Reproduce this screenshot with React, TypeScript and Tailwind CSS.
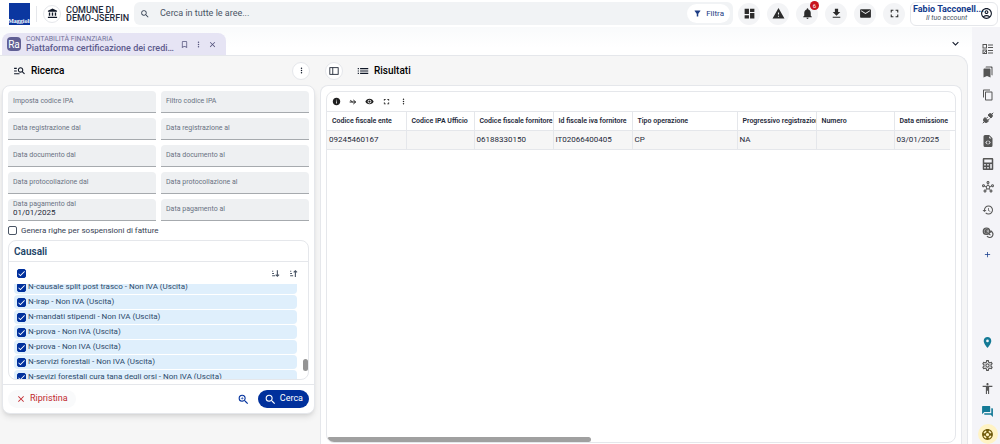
import React from 'react';
import {
  MdAccessibility,
  MdAccountBalance,
  MdAdd,
  MdBookmarkBorder,
  MdBookmarks,
  MdCheck,
  MdClose,
  MdContentCopy,
  MdDashboard,
  MdEmail,
  MdFileDownload,
  MdFilterAlt,
  MdForum,
  MdFullscreen,
  MdHistory,
  MdInfo,
  MdKeyboardArrowDown,
  MdList,
  MdLocationOn,
  MdManageSearch,
  MdMoreVert,
  MdNotifications,
  MdOutlineAccountCircle,
  MdOutlineHub,
  MdOutlineSettings,
  MdSearch,
  MdSupport,
  MdVisibility,
  MdWarning,
  MdZoomIn,
} from 'react-icons/md';
import { FaCalculator } from 'react-icons/fa';
import { BsFileEarmarkCodeFill } from 'react-icons/bs';

type IconProps = { className?: string };

function ChecklistIcon({ className }: IconProps) {
  return (
    <svg viewBox="0 0 24 24" fill="none" stroke="currentColor" strokeWidth="2" className={className}>
      <rect x="2" y="3" width="7" height="7" />
      <rect x="2" y="14" width="7" height="7" />
      <path d="M3.5 17.5l1.5 1.5 3-3.5M12 4h10M12 9h10M12 15h10M12 20h10" />
    </svg>
  );
}

function PlugsIcon({ className }: IconProps) {
  return (
    <svg viewBox="0 0 24 24" fill="currentColor" stroke="currentColor" strokeWidth="2" className={className}>
      <path d="M6 11l7 7-1.500 1.500c-2 2-5 2-7 0s-2-5 0-7z" />
      <path d="M12 6l6 6 1.500-1.500c1.700-1.700 1.700-4.300 0-6s-4.300-1.700-6 0z" />
      <path d="M1.500 22.500l4-4M18.500 5.500l4-4M9 12.500l3-3M12.500 16l3-3" fill="none" />
    </svg>
  );
}

function CoinsIcon({ className }: IconProps) {
  return (
    <svg viewBox="0 0 24 24" fill="none" stroke="currentColor" strokeWidth="2.4" className={className}>
      <circle cx="9" cy="8.500" r="6.500" fill="currentColor" fillOpacity="0.45" />
      <path d="M11.500 6a3.200 3.200 0 1 0 0 5M6 8.500h4" />
      <path d="M18 8.500a6.500 6.500 0 1 1-8 9.500M21 11l-3-3-2 3.500M14 14.500l3 1.500" />
    </svg>
  );
}

function PanelIcon({ className }: IconProps) {
  return (
    <svg viewBox="0 0 24 24" fill="none" stroke="currentColor" strokeWidth="2" className={className}>
      <rect x="2" y="4" width="20" height="16" />
      <path d="M9 4v16" />
    </svg>
  );
}

function SplitArrowIcon({ className }: IconProps) {
  return (
    <svg viewBox="0 0 24 24" fill="none" stroke="currentColor" strokeWidth="3" className={className}>
      <path d="M2 12h18M13 6l7 6-7 6M4 7l7 5" />
    </svg>
  );
}

function SortIcon({ className, up }: IconProps & { up?: boolean }) {
  return (
    <svg viewBox="0 0 24 24" fill="none" stroke="currentColor" strokeWidth="3" className={className}>
      <path d="M3 6h3M3 12h5M3 18h8" />
      <path d={up ? 'M17 21V5M12.5 9L17 4.500L21.500 9' : 'M17 3v16M12.500 15l4.500 4.500L21.500 15'} />
    </svg>
  );
}

const topActions = [
  { icon: MdDashboard, label: 'Dashboard' },
  { icon: MdWarning, label: 'Avvisi' },
  { icon: MdNotifications, label: 'Notifiche', badge: 6 },
  { icon: MdFileDownload, label: 'Download' },
  { icon: MdEmail, label: 'Messaggi' },
  { icon: MdFullscreen, label: 'Schermo intero' },
];

const sideTools = [
  { icon: ChecklistIcon, label: 'Attività' },
  { icon: MdBookmarks, label: 'Segnalibri' },
  { icon: MdContentCopy, label: 'Copia' },
  { icon: PlugsIcon, label: 'Connessioni' },
  { icon: BsFileEarmarkCodeFill, label: 'Codice' },
  { icon: FaCalculator, label: 'Calcolatrice' },
  { icon: MdOutlineHub, label: 'Rete' },
  { icon: MdHistory, label: 'Cronologia' },
  { icon: CoinsIcon, label: 'Valute' },
];

const fields = [
  { id: 'ipa', label: 'Imposta codice IPA' },
  { id: 'filtro-ipa', label: 'Filtro codice IPA' },
  { id: 'reg-dal', label: 'Data registrazione dal' },
  { id: 'reg-al', label: 'Data registrazione al' },
  { id: 'doc-dal', label: 'Data documento dal' },
  { id: 'doc-al', label: 'Data documento al' },
  { id: 'prot-dal', label: 'Data protocollazione dal' },
  { id: 'prot-al', label: 'Data protocollazione al' },
  { id: 'pag-dal', label: 'Data pagamento dal', value: '01/01/2025' },
  { id: 'pag-al', label: 'Data pagamento al' },
];

const causali = [
  'N-causale split post trasco - Non IVA (Uscita)',
  'N-irap - Non IVA (Uscita)',
  'N-mandati stipendi - Non IVA (Uscita)',
  'N-prova - Non IVA (Uscita)',
  'N-prova - Non IVA (Uscita)',
  'N-servizi forestali - Non IVA (Uscita)',
  'N-sevizi forestali cura tana degli orsi - Non IVA (Uscita)',
];

const columns = [
  { title: 'Codice fiscale ente', value: '09245460167', width: 'w-[79px]' },
  { title: 'Codice IPA Ufficio', value: '', width: 'w-[68px]' },
  { title: 'Codice fiscale fornitore', value: '06188330150', width: 'w-[79px]' },
  { title: 'Id fiscale iva fornitore', value: 'IT02066400405', width: 'w-[79px]' },
  { title: 'Tipo operazione', value: 'CP', width: 'w-[105px]' },
  { title: 'Progressivo registrazione', value: 'NA', width: 'w-[79px]' },
  { title: 'Numero', value: '', width: 'w-[78px]' },
  { title: 'Data emissione', value: '03/01/2025', width: '' },
];

function CheckBox({ label, checked = true }: { label?: string; checked?: boolean }) {
  return (
    <span className="relative flex w-[9px] h-[9px] shrink-0">
      <input
        type="checkbox"
        aria-label={label}
        defaultChecked={checked}
        className="peer appearance-none w-[9px] h-[9px] rounded-xs border border-gray-600 checked:bg-[#00309c] checked:border-[#00309c]"
      />
      <MdCheck className="absolute inset-0 w-[9px] h-[9px] text-white opacity-0 peer-checked:opacity-100 pointer-events-none" />
    </span>
  );
}

function Field({ id, label, value }: { id: string; label: string; value?: string }) {
  const box = 'h-[22px] px-[5px] bg-[#eef0f2] border-b border-[#a6aaae] rounded-t';

  if (!value) {
    return (
      <input
        id={id}
        type="text"
        aria-label={label}
        placeholder={label}
        className={`${box} w-full pb-[2px] text-[7px] text-gray-700 placeholder:text-gray-500 outline-none`}
      />
    );
  }

  return (
    <div className={`${box} flex flex-col`}>
      <label htmlFor={id} className="pt-px text-[7px] leading-[9px] text-gray-500">
        {label}
      </label>
      <input
        id={id}
        type="text"
        defaultValue={value}
        className="w-full h-[10px] -mt-px text-[8px] leading-[10px] text-gray-800 outline-none"
      />
    </div>
  );
}

function TopBar() {
  return (
    <header className="flex items-center h-[27px] pl-[9px] pr-[2px] shrink-0 bg-white">
      <div className="flex items-end justify-center w-[21px] h-[22px] bg-[#0b37a0]">
        <span className="font-['Liberation_Serif'] font-bold text-[6px] leading-[7px] text-white">Maggioli</span>
      </div>
      <div className="w-px h-4 mx-[6px] bg-gray-200" />
      <button aria-label="Ente" className="flex items-center justify-center w-[18px] h-[18px] mr-[5px] rounded-full border border-gray-200">
        <MdAccountBalance className="w-[11px] h-[11px]" />
      </button>
      <p className="w-[68px] text-[9px] leading-[8px] font-medium text-gray-800 whitespace-nowrap">
        COMUNE DI
        <br />
        DEMO-JSERFIN
      </p>
      <div className="flex flex-1 items-center h-[23px] pl-[6px] pr-[3px] mr-[5px] bg-[#f1f3f5] rounded-md">
        <MdSearch className="w-[10px] h-[10px] mr-[10px] text-gray-700" />
        <input
          type="text"
          aria-label="Cerca in tutte le aree"
          placeholder="Cerca in tutte le aree..."
          className="flex-1 text-[9px] placeholder:text-gray-600 outline-none"
        />
        <button className="flex items-center gap-1 h-[19px] px-[6px] bg-white rounded-full text-[8px] text-[#1c3c84]">
          <MdFilterAlt className="w-[9px] h-[9px]" />
          Filtra
        </button>
      </div>
      <div className="flex items-center gap-[7px]">
        {topActions.map(({ icon: Icon, label, badge }) => (
          <button
            key={label}
            aria-label={label}
            className="relative flex items-center justify-center w-[22px] h-[22px] rounded-full bg-gray-100 text-[#2b2b2b]"
          >
            <Icon className="w-[13px] h-[13px]" />
            {badge && (
              <span className="absolute -top-[2px] -right-px w-[9px] h-[9px] rounded-full bg-[#c8141e] text-[6px] leading-[9px] text-white">
                {badge}
              </span>
            )}
          </button>
        ))}
      </div>
      <button className="flex items-center w-[88px] h-[24px] pl-[2px] pr-[4px] ml-[5px] border border-gray-200 rounded-md">
        <span className="flex-1 min-w-0 text-left whitespace-nowrap">
          <span className="block text-[9px] leading-[9px] font-bold text-[#123a8c]">Fabio Tacconell...</span>
          <span className="block pl-[13px] text-[7px] leading-[8px] italic text-gray-600">Il tuo account</span>
        </span>
        <MdOutlineAccountCircle className="w-[13px] h-[13px] shrink-0" />
      </button>
    </header>
  );
}

function TabStrip() {
  return (
    <div className="flex items-end justify-between h-[28px] shrink-0 pl-[2px] pr-[10px]">
      <div className="flex items-center w-[224px] h-[22px] pl-[5px] pr-[9px] bg-[#e6e4f4] rounded-t-lg">
        <svg viewBox="0 0 14 14" className="w-[14px] h-[14px] mr-[5px]">
          <rect width="14" height="14" rx="4" fill="#605f94" />
          <text x="7" y="11" textAnchor="middle" fontSize="10" fill="#fff" fontFamily="Roboto">
            Ra
          </text>
        </svg>
        <div className="w-[149px]">
          <p className="text-[7px] leading-[8px] text-[#75739b]">CONTABILITÀ FINANZIARIA</p>
          <p className="truncate text-[9px] leading-[10px] font-medium text-[#5c5a8c]">
            Piattaforma certificazione dei crediti commerciali
          </p>
        </div>
        <div className="flex flex-1 items-center justify-between pl-[5px] text-[#54537c]">
          <button aria-label="Segnalibro">
            <MdBookmarkBorder className="w-[9px] h-[9px]" />
          </button>
          <button aria-label="Menu scheda">
            <MdMoreVert className="w-[9px] h-[9px]" />
          </button>
          <button aria-label="Chiudi scheda">
            <MdClose className="w-[9px] h-[9px]" />
          </button>
        </div>
      </div>
      <button aria-label="Schede aperte" className="mb-[5px]">
        <MdKeyboardArrowDown className="w-[13px] h-[13px]" />
      </button>
    </div>
  );
}

function SearchPanel() {
  return (
    <section className="w-[313px] shrink-0">
      <div className="flex items-center h-[29px] pl-[11px] pr-[5px]">
        <MdManageSearch className="w-[13px] h-[13px] mr-[5px]" />
        <h2 className="flex-1 text-[10px] font-medium text-black">Ricerca</h2>
        <button aria-label="Opzioni ricerca" className="flex items-center justify-center w-[18px] h-[18px] rounded-full bg-white border border-gray-200">
          <MdMoreVert className="w-[9px] h-[9px]" />
        </button>
      </div>
      <form className="bg-white border border-gray-200 rounded-lg shadow-md" onSubmit={(e) => e.preventDefault()}>
        <div className="px-[5px] pt-[5px]">
          <div className="grid grid-cols-2 gap-[5px]">
            {fields.map((field) => (
              <Field key={field.id} {...field} />
            ))}
          </div>
          <label className="flex items-center gap-[4px] h-[19px] text-[8px] text-gray-700">
            <CheckBox checked={false} />
            Genera righe per sospensioni di fatture
          </label>
          <div className="border border-gray-200 rounded-lg overflow-hidden">
            <h3 className="h-[21px] px-[5px] text-[10px] leading-[21px] font-semibold text-[#1d4468] border-b border-gray-200">
              Causali
            </h3>
            <div className="flex items-center h-[22px] pl-[8px] pr-[10px] text-gray-600">
              <CheckBox label="Seleziona tutte le causali" />
              <button type="button" aria-label="Ordina decrescente" className="ml-auto mr-[9px]">
                <SortIcon className="w-[9px] h-[9px]" />
              </button>
              <button type="button" aria-label="Ordina crescente">
                <SortIcon up className="w-[9px] h-[9px]" />
              </button>
            </div>
            <div className="flex h-[95px] pl-[5px] overflow-hidden">
              <ul className="flex flex-1 flex-col gap-px -mt-1">
                {causali.map((causale, i) => (
                  <li key={i} className="shrink-0 h-[14px] bg-[#dfeffc] rounded">
                    <label className="flex items-center gap-[2px] h-full pl-[3px] text-[8px] text-[#2c4a6b]">
                      <CheckBox />
                      {causale}
                    </label>
                  </li>
                ))}
              </ul>
              <div className="flex items-end w-[11px] pl-[6px] pb-2">
                <div className="w-[5px] h-[12px] rounded-full bg-[#949494]" />
              </div>
            </div>
          </div>
        </div>
        <div className="flex items-center h-[29px] mt-[4px] px-[5px] border-t border-gray-200">
          <button type="reset" className="flex items-center gap-[4px] h-[18px] px-[8px] rounded-full bg-gray-50 text-[9px] text-[#c0272d]">
            <MdClose className="w-[10px] h-[10px]" />
            Ripristina
          </button>
          <button type="button" aria-label="Ricerca avanzata" className="ml-auto mr-[8px] text-[#00309c]">
            <MdZoomIn className="w-[13px] h-[13px]" />
          </button>
          <button type="submit" className="flex items-center gap-[3px] h-[18px] px-[6px] rounded-full bg-[#00309c] text-[9px] text-white">
            <MdSearch className="w-[13px] h-[13px]" />
            Cerca
          </button>
        </div>
      </form>
    </section>
  );
}

function ResultsPanel() {
  return (
    <section className="flex flex-col flex-1 min-w-0">
      <div className="flex items-center h-[29px] shrink-0 pl-[5px]">
        <button aria-label="Mostra pannello" className="flex items-center justify-center w-[18px] h-[18px] mr-[13px] rounded-full bg-white border border-gray-200">
          <PanelIcon className="w-[10px] h-[10px]" />
        </button>
        <MdList className="w-[14px] h-[14px] mr-[4px]" />
        <h2 className="text-[10px] font-medium text-black">Risultati</h2>
      </div>
      <div className="flex flex-col flex-1 p-[5px] pb-px bg-white border border-b-0 border-gray-200 rounded-t-lg">
        <div className="flex flex-col flex-1 border border-gray-200 rounded-lg overflow-hidden">
          <div className="flex items-center gap-[8px] h-[19px] pl-[5px] text-[#1f1f1f]">
            <button aria-label="Informazioni"><MdInfo className="w-[9px] h-[9px]" /></button>
            <button aria-label="Azioni"><SplitArrowIcon className="w-[8px] h-[8px]" /></button>
            <button aria-label="Visualizza"><MdVisibility className="w-[9px] h-[9px]" /></button>
            <button aria-label="Espandi"><MdFullscreen className="w-[9px] h-[9px]" /></button>
            <button aria-label="Altro"><MdMoreVert className="w-[9px] h-[9px]" /></button>
          </div>
          <table className="w-full table-fixed border-t border-gray-200 text-left text-gray-800">
            <thead>
              <tr className="h-[19px] border-b border-gray-200">
                {columns.map((col) => (
                  <th
                    key={col.title}
                    className={`${col.width} pl-[5px] text-[7px] font-semibold whitespace-nowrap overflow-hidden border-r border-gray-200 nth-8:border-r-0`}
                  >
                    {col.title}
                  </th>
                ))}
                <th className="w-[5px]" />
              </tr>
            </thead>
            <tbody>
              <tr className="h-[19px]">
                {columns.map((col) => (
                  <td key={col.title} className="pl-[2px] text-[8px] bg-[#f6f6f6] border-r border-b border-gray-200 nth-8:border-r-0">
                    {col.value}
                  </td>
                ))}
                <td />
              </tr>
            </tbody>
          </table>
          <div className="w-[42%] h-[5px] mt-auto rounded-full bg-[#a0a0a0]" />
        </div>
      </div>
    </section>
  );
}

function SideBar() {
  return (
    <aside className="flex flex-col items-center w-[28px] shrink-0 pt-[10px] pl-[3px] bg-[#f4f4f8] text-[#555]">
      {sideTools.map(({ icon: Icon, label }) => (
        <button key={label} aria-label={label} className="flex items-center justify-center w-[23px] h-[23px]">
          <Icon className="w-[12px] h-[12px]" />
        </button>
      ))}
      <button aria-label="Aggiungi" className="flex items-center justify-center w-[23px] h-[20px] text-[#123a8c]">
        <MdAdd className="w-[9px] h-[9px]" />
      </button>
      <div className="flex flex-col items-center mt-auto">
        <button aria-label="Posizione" className="flex items-center justify-center h-[23px] text-[#147a96]">
          <MdLocationOn className="w-[13px] h-[13px]" />
        </button>
        <button aria-label="Impostazioni" className="flex items-center justify-center h-[23px]">
          <MdOutlineSettings className="w-[13px] h-[13px]" />
        </button>
        <button aria-label="Accessibilità" className="flex items-center justify-center h-[23px]">
          <MdAccessibility className="w-[13px] h-[13px]" />
        </button>
        <button aria-label="Chat" className="flex items-center justify-center h-[23px] text-[#147a96]">
          <MdForum className="w-[13px] h-[13px]" />
        </button>
        <button aria-label="Supporto" className="flex items-center justify-center w-5 h-5 mt-px rounded-full bg-[#fff3c4] text-[#6f5a0c]">
          <MdSupport className="w-[13px] h-[13px]" />
        </button>
      </div>
    </aside>
  );
}

export default function App() {
  return (
    <div className="flex flex-col h-screen overflow-hidden bg-white font-[Roboto,sans-serif] text-gray-900">
      <TopBar />
      <div className="flex flex-1 min-h-0">
        <main className="flex flex-col flex-1 min-w-0 bg-linear-to-b from-gray-50 to-white to-5%">
          <TabStrip />
          <div className="flex flex-1 min-h-0 gap-[5px] pl-[2px] pr-[5px] mr-[4px] bg-[#f6f6f6] border-t border-r border-gray-200 rounded-tr-xl">
            <SearchPanel />
            <ResultsPanel />
          </div>
        </main>
        <SideBar />
      </div>
    </div>
  );
}
